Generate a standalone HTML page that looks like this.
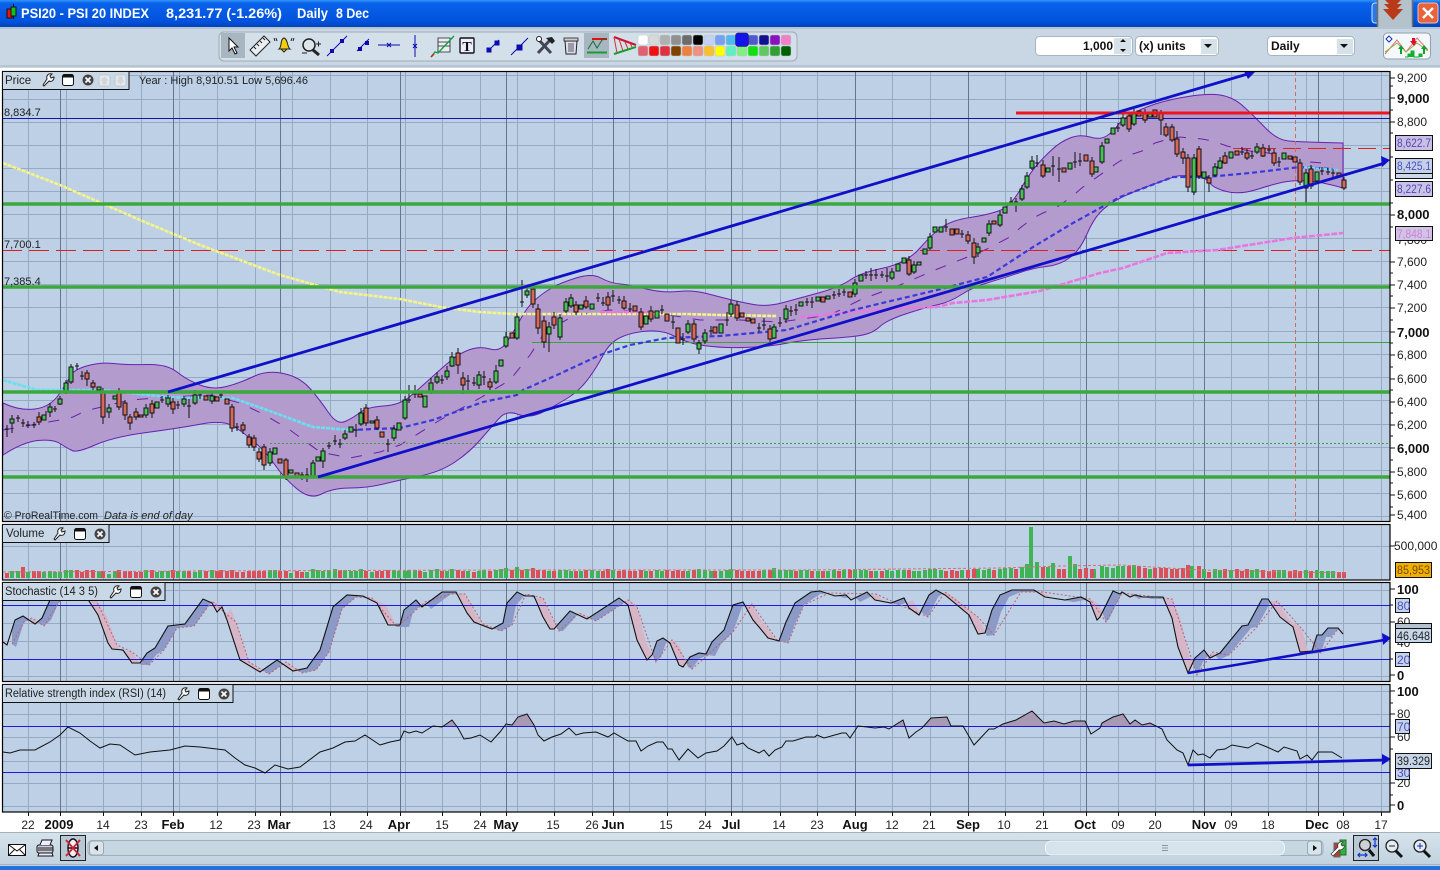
<!DOCTYPE html>
<html><head><meta charset="utf-8"><title>PSI20</title>
<style>html,body{margin:0;padding:0;background:#fff;overflow:hidden}svg{display:block;font-family:"Liberation Sans",sans-serif}</style></head>
<body>
<svg xmlns="http://www.w3.org/2000/svg" width="1440" height="870" viewBox="0 0 1440 870">
<defs>
<linearGradient id="tb" x1="0" y1="0" x2="0" y2="1"><stop offset="0" stop-color="#2f96fa"/><stop offset=".12" stop-color="#0a62ea"/><stop offset=".8" stop-color="#0052dc"/><stop offset="1" stop-color="#0043b8"/></linearGradient>
<linearGradient id="bb" x1="0" y1="0" x2="0" y2="1"><stop offset="0" stop-color="#d6e3ec"/><stop offset="1" stop-color="#c0d2de"/></linearGradient>
<g id="wr"><path d="M-6 5l1 1 5-5c2 1 5 0 5-4l-3 1-1-2 2-2c-4-1-6 2-5 5z" fill="#fff" stroke="#222"/></g>
<g id="win"><rect x="-5.5" y="-5.5" width="11" height="11" rx="2" fill="#fff" stroke="#111"/><rect x="-5" y="-5.5" width="10" height="3" fill="#111"/></g>
<g id="xc"><circle r="5.5" fill="#444"/><path d="M-2.5-2.5l5 5m0-5l-5 5" stroke="#fff" stroke-width="1.8"/></g>
<polygon id="kb" points="3,642 7,645 15,620 23,616 35,624 42,618 50,600 56,590 80,588 87,598 98,615 108,643 112,649 123,650 132,663 140,663 147,653 155,648 168,626 185,624 203,599 212,603 217,612 222,607 227,620 240,660 260,672 277,660 293,671 307,668 320,650 333,607 347,595 363,596 377,603 388,625 400,625 404,610 416,600 422,607 442,592 456,592 467,613 474,622 492,629 503,623 507,603 517,592 525,596 534,596 543,617 550,629 554,629 570,611 587,619 619,598 628,605 637,640 647,660 652,655 657,641 663,638 670,643 679,665 683,667 690,657 699,653 706,654 712,642 724,630 733,605 743,602 753,620 759,627 768,638 779,641 786,622 795,603 811,592 820,591 835,596 846,595 851,600 867,592 875,600 891,603 904,598 909,608 919,615 929,595 936,590 945,595 969,615 978,634 985,633 992,610 1000,595 1012,590 1034,590 1045,597 1065,600 1081,597 1090,602 1097,620 1100,617 1113,591 1120,594 1122,592 1130,597 1135,595 1143,597 1163,597 1172,618 1178,647 1188,673 1195,658 1204,650 1210,658 1220,653 1242,626 1248,625 1262,599 1268,599 1280,617 1293,627 1300,652 1312,651 1317,635 1322,635 1328,628 1338,628 1343,634 1343,700 3,700"/>
<polygon id="ka" points="3,642 7,645 15,620 23,616 35,624 42,618 50,600 56,590 80,588 87,598 98,615 108,643 112,649 123,650 132,663 140,663 147,653 155,648 168,626 185,624 203,599 212,603 217,612 222,607 227,620 240,660 260,672 277,660 293,671 307,668 320,650 333,607 347,595 363,596 377,603 388,625 400,625 404,610 416,600 422,607 442,592 456,592 467,613 474,622 492,629 503,623 507,603 517,592 525,596 534,596 543,617 550,629 554,629 570,611 587,619 619,598 628,605 637,640 647,660 652,655 657,641 663,638 670,643 679,665 683,667 690,657 699,653 706,654 712,642 724,630 733,605 743,602 753,620 759,627 768,638 779,641 786,622 795,603 811,592 820,591 835,596 846,595 851,600 867,592 875,600 891,603 904,598 909,608 919,615 929,595 936,590 945,595 969,615 978,634 985,633 992,610 1000,595 1012,590 1034,590 1045,597 1065,600 1081,597 1090,602 1097,620 1100,617 1113,591 1120,594 1122,592 1130,597 1135,595 1143,597 1163,597 1172,618 1178,647 1188,673 1195,658 1204,650 1210,658 1220,653 1242,626 1248,625 1262,599 1268,599 1280,617 1293,627 1300,652 1312,651 1317,635 1322,635 1328,628 1338,628 1343,634 1343,560 3,560"/>
<clipPath id="da"><use href="#ka" transform="translate(9,2)"/></clipPath>
<clipPath id="db"><use href="#kb" transform="translate(9,2)"/></clipPath>
<clipPath id="sp"><rect x="3" y="583" width="1387" height="98"/></clipPath>
<clipPath id="ra"><rect x="3" y="685" width="1387" height="41"/></clipPath>
</defs>

<!-- title bar -->
<rect width="1440" height="27" fill="url(#tb)"/>
<rect x="7" y="9" width="5" height="9" fill="#f01010" stroke="#111"/><path d="M13.5 4v15" stroke="#111"/><rect x="11" y="7" width="5" height="9" fill="#10c020" stroke="#111"/>
<g fill="#fff" font-weight="bold" font-size="14">
<text x="21" y="18" textLength="128" lengthAdjust="spacingAndGlyphs">PSI20 - PSI 20 INDEX</text>
<text x="166" y="18" textLength="116" lengthAdjust="spacingAndGlyphs">8,231.77 (-1.26%)</text>
<text x="297" y="18" textLength="31" lengthAdjust="spacingAndGlyphs">Daily</text>
<text x="336" y="18" textLength="33" lengthAdjust="spacingAndGlyphs">8 Dec</text>
</g>
<rect x="1372" y="3" width="20" height="20" rx="3" fill="#2a78e8" stroke="#cfe0fa"/>
<rect x="1377.5" y="-1" width="35" height="31" fill="#b4c2cc" stroke="#6c6c6c" stroke-width="1.5"/>
<path d="M1385 0h16l-8 8zM1384 4h18l-9 9zM1383 9h20l-10 11z" fill="#b83a18"/>
<rect x="1418" y="3" width="20" height="20" rx="3" fill="#e8623c" stroke="#f4c0b0"/><path d="M1423 8l10 10m0-10l-10 10" stroke="#fff" stroke-width="2.4"/>

<!-- toolbar -->
<rect y="27" width="1440" height="41" fill="#c8d7e3"/>
<path d="M0 28H1440M0 66H1440" stroke="#a5b2bc"/>
<rect x="219" y="32" width="578" height="29" rx="5" fill="#d3e0ea" stroke="#9eabb5"/>
<rect x="221" y="33" width="24" height="25" fill="#a7b6c1"/>
<path d="M229 38v13l3-3 3 6 2-1-3-6h4z" fill="#fff" stroke="#111"/>
<path d="M250 50l14-14 6 6-14 14z" fill="#e8eef2" stroke="#222"/><path d="M254 47l2 2m1-5l2 2m1-5l2 2m1-5l2 2" stroke="#222"/>
<path d="M279 49c3-2 1-10 5-11 4 1 3 9 6 11z" fill="#f4cc10" stroke="#222"/><path d="M281 49h6l-3 3z" fill="#f4cc10" stroke="#222"/><path d="M276 38l1 3m-3-3l1 3M292 38l-1 3m3-3l-1 3" stroke="#222"/>
<circle cx="309" cy="45" r="6" fill="#dfe6ea" stroke="#222" stroke-width="1.5"/><path d="M313 50l6 5" stroke="#222" stroke-width="3"/><path d="M316 44h5m-2.500-2.500v5M302 53h5" stroke="#222"/>
<g stroke="#0a0ab0" fill="none"><path d="M327 56l20-20M352 56" /><path d="M357 51l12-12M378 45h22M415 35v22"/><path d="M431 55" /></g>
<g fill="#0a0ab0"><rect x="330" y="49" width="4" height="4"/><rect x="340" y="39" width="4" height="4"/><rect x="358" y="47" width="4" height="4"/><rect x="365" y="41" width="4" height="4"/><path d="M387 43l4 4m0-4l-4 4M413 44l4 4m0-4l-4 4" stroke="#0a0ab0"/></g>
<path d="M438 38h12v14h-12zM438 42h12M438 46h12" fill="#e8eef2" stroke="#222" stroke-width=".8"/><path d="M431 57l4-5 3 1 16-17" fill="none" stroke="#10a040" stroke-width="1.4"/><path d="M431 57l3-3" stroke="#d02020" stroke-width="1.5"/>
<rect x="460" y="38" width="14" height="15" rx="1" fill="#eef" stroke="#111" stroke-width="1.400"/><text x="467" y="51" font-size="14" font-family="Liberation Serif,serif" font-weight="bold" text-anchor="middle" fill="#111">T</text>
<g stroke="#0a0ab0"><path d="M487 52l12-12"/><rect x="487" y="48" width="4" height="4" fill="#0a0ab0"/><rect x="495" y="41" width="4" height="4" fill="#0a0ab0"/><path d="M511 55l17-17M515 51" /><rect x="517" y="45" width="5" height="5" fill="#0a0ab0"/></g>
<path d="M538 39l13 14M551 39l-13 14" stroke="#445" stroke-width="3"/><path d="M546 38l6-1 3 4-3 3z" fill="#222"/><circle cx="539" cy="39" r="2.500" fill="#fff" stroke="#222"/>
<path d="M565 41h12l-1 13h-10z" fill="#dde" stroke="#222"/><rect x="564" y="38" width="14" height="3" fill="#ccc" stroke="#222" stroke-width=".8"/><path d="M569 43v9m2-9v9m2-9v9" stroke="#222" stroke-width=".7"/>
<rect x="584" y="33" width="25" height="25" fill="#a7b6c1"/>
<path d="M592 39h15" stroke="#e01010" stroke-width="2"/><path d="M587 52.500h20" stroke="#10a030" stroke-width="2"/><path d="M588 49l5-8 4 7 5-8 4-1" fill="none" stroke="#107030"/>
<path d="M614 37l22 8" stroke="#d01030" stroke-width="2"/><path d="M614 54l22-7" stroke="#10a030" stroke-width="2"/><path d="M614 37l3 16m2-14l4 12m2-9l3 7m2-6l2 4" stroke="#d03030"/>
<!-- palette -->
<g stroke="#b8c6d0" stroke-width=".5">
<rect x="638" y="35" width="10" height="10" rx="2" fill="#fff"/><rect x="649" y="35" width="10" height="10" rx="2" fill="#d8d8d8"/><rect x="660" y="35" width="10" height="10" rx="2" fill="#b0b0b0"/><rect x="671" y="35" width="10" height="10" rx="2" fill="#909090"/><rect x="682" y="35" width="10" height="10" rx="2" fill="#6c6c6c"/><rect x="693" y="35" width="10" height="10" rx="2" fill="#000"/><rect x="704" y="35" width="10" height="10" rx="2" fill="#c4d0f4"/><rect x="715" y="35" width="10" height="10" rx="2" fill="#78a0f0"/><rect x="726" y="35" width="10" height="10" rx="2" fill="#50b8f0"/><rect x="748" y="35" width="10" height="10" rx="2" fill="#5058d0"/><rect x="759" y="35" width="10" height="10" rx="2" fill="#101090"/><rect x="770" y="35" width="10" height="10" rx="2" fill="#8a10c0"/><rect x="781" y="35" width="10" height="10" rx="2" fill="#f080c8"/>
<rect x="638" y="46" width="10" height="10" rx="2" fill="#e06070"/><rect x="649" y="46" width="10" height="10" rx="2" fill="#f01010"/><rect x="660" y="46" width="10" height="10" rx="2" fill="#e03040"/><rect x="671" y="46" width="10" height="10" rx="2" fill="#804000"/><rect x="682" y="46" width="10" height="10" rx="2" fill="#f08040"/><rect x="693" y="46" width="10" height="10" rx="2" fill="#f09080"/><rect x="704" y="46" width="10" height="10" rx="2" fill="#f8c030"/><rect x="715" y="46" width="10" height="10" rx="2" fill="#ff0"/><rect x="726" y="46" width="10" height="10" rx="2" fill="#60f0c0"/><rect x="737" y="46" width="10" height="10" rx="2" fill="#80f080"/><rect x="748" y="46" width="10" height="10" rx="2" fill="#10e010"/><rect x="759" y="46" width="10" height="10" rx="2" fill="#60c860"/><rect x="770" y="46" width="10" height="10" rx="2" fill="#30a030"/><rect x="781" y="46" width="10" height="10" rx="2" fill="#006000"/>
<rect x="735.500" y="33" width="13" height="13.500" rx="2.500" fill="#1414e8" stroke="#223"/>
</g>
<!-- right controls -->
<rect x="1035.500" y="36.500" width="97" height="19" rx="4" fill="#fff" stroke="#a8b5be"/><rect x="1114" y="38" width="17" height="16" fill="#d6e2ea"/>
<text x="1113" y="50" font-size="12" font-weight="bold" text-anchor="end" fill="#111">1,000</text><path d="M1120 42l3-3 3 3zM1120 49l3 3 3-3z" fill="#111"/>
<rect x="1135.500" y="36.500" width="83" height="19" rx="4" fill="#fff" stroke="#a8b5be"/><text x="1139" y="50" font-size="12" font-weight="bold" fill="#111">(x) units</text><rect x="1201" y="39" width="16" height="15" fill="#d6e2ea"/><path d="M1204 44h8l-4 4z" fill="#111"/>
<rect x="1267.500" y="36.500" width="87" height="19" rx="4" fill="#fff" stroke="#a8b5be"/><text x="1271" y="50" font-size="12" font-weight="bold" fill="#111">Daily</text><rect x="1337" y="39" width="16" height="15" fill="#d6e2ea"/><path d="M1340 44h8l-4 4z" fill="#111"/>
<rect x="1383.500" y="33" width="47" height="26" rx="4" fill="#f4f8fa" stroke="#92a0aa"/>
<path d="M1385 54l12-14 9 12 11-14 11 12" fill="none" stroke="#e07070"/><path d="M1385 52l12-9 9 9 11-9 11 8" fill="none" stroke="#90b040"/><path d="M1405 57h3v-3h3v-3h3v6h5v-3h3v3" fill="#10b030" stroke="#10b030"/><path d="M1401 45l-3 4h2v5h2v-5h2zM1424 45l-3 4h2v5h2v-5h2z" fill="#10a030"/><path d="M1412 38h3v3h2l-3 5-4-5h2z" fill="#e01030"/><path d="M1389 36l3 3-3 3-3-3z" fill="#fff" stroke="#1030c0"/>

<!-- chart background -->
<rect y="68" width="1440" height="764" fill="#fff"/>
<rect x="2" y="71" width="1388" height="741" fill="#bdd0e6"/>
<!-- minor vertical -->
<path stroke="#97aac4" fill="none" d="M28.500 71V812M66.500 71V812M103.500 71V812M141.500 71V812M179.500 71V812M217.500 71V812M255.500 71V812M292.500 71V812M330.500 71V812M367.500 71V812M405.500 71V812M442.500 71V812M480.500 71V812M517.500 71V812M554.500 71V812M592.500 71V812M629.500 71V812M667.500 71V812M705.500 71V812M742.500 71V812M780.500 71V812M817.500 71V812M855.500 71V812M892.500 71V812M930.500 71V812M968.500 71V812M1005.500 71V812M1043.500 71V812M1080.500 71V812M1118.500 71V812M1155.500 71V812M1193.500 71V812M1231.500 71V812M1268.500 71V812M1306.500 71V812M1343.500 71V812M1381.500 71V812"/>
<!-- horizontal grids -->
<path stroke="#97aac4" fill="none" d="M2 75.500H1390M2 99.500H1390M2 122.500H1390M2 145.500H1390M2 168.500H1390M2 191.500H1390M2 214.500H1390M2 238.500H1390M2 261.500H1390M2 284.500H1390M2 307.500H1390M2 331.500H1390M2 354.500H1390M2 377.500H1390M2 400.500H1390M2 424.500H1390M2 447.500H1390M2 470.500H1390M2 493.500H1390M2 516.500H1390M2 546.500H1390M2 590.500H1390M2 623.500H1390M2 641.500H1390M2 676.500H1390M2 691.500H1390M2 714.500H1390M2 737.500H1390M2 761.500H1390M2 783.500H1390M2 806.500H1390"/>
<!-- major vertical -->
<path stroke="#65758f" fill="none" d="M60.500 71V812M173.500 71V812M280.500 71V812M400.500 71V812M506.500 71V812M613.500 71V812M731.500 71V812M855.500 71V812M968.500 71V812M1086.500 71V812M1204.500 71V812M1318.500 71V812"/>

<!-- bollinger -->
<path fill="#b39bce" stroke="#6a20b0" d="M3 403Q20 411 35 409Q50 407 58.5 395Q67 383 70 376.5Q73 370 86.5 366Q100 362 113.5 363.5Q127 365 147 364.5Q167 364 177 372Q187 380 200 385Q213 390 226.5 386.5Q240 383 253.5 376.5Q267 370 283.5 373.5Q300 377 310 388.5Q320 400 328.5 412.5Q337 425 345 421.5Q353 418 360 412.5Q367 407 383.5 406Q400 405 410 396.5Q420 388 431.5 377.5Q443 367 451.5 360Q460 353 470 349.5Q480 346 490 349Q500 352 506.5 342.5Q513 333 520 320Q527 307 535 300Q543 293 551.5 288Q560 283 576 278Q592 273 601 278Q610 283 620 284Q630 285 646.5 289Q663 293 678 291.5Q693 290 706.5 293.5Q720 297 730 299.5Q740 302 753.5 304.5Q767 307 783.5 302.5Q800 298 820 292.5Q840 287 850 280Q860 273 883.5 268Q907 263 920 248Q933 233 943 226.500Q953 220 970 217.5Q987 215 998.5 211Q1010 207 1020 190Q1030 173 1036.5 165.5Q1043 158 1051.5 150Q1060 142 1070 138Q1080 134 1090 137Q1100 140 1106.5 136Q1113 132 1118 125Q1123 118 1140 110Q1157 102 1182 97.5Q1207 93 1220 95Q1233 97 1243 106Q1253 115 1265 127.5Q1277 140 1288.5 141Q1300 142 1343 143L1343 188Q1322 182 1309.5 181Q1297 180 1287 181.5Q1277 183 1258.5 189Q1240 195 1226.5 191.5Q1213 188 1210 183Q1207 178 1194.5 176.5Q1182 175 1177.5 176Q1173 177 1151.5 185Q1130 193 1118.5 199Q1107 205 1100 212.5Q1093 220 1086.5 235Q1080 250 1070 257.5Q1060 265 1046.5 266.5Q1033 268 1020 272.5Q1007 277 990 282Q973 287 961.5 294.5Q950 302 938.5 304.5Q927 307 907 313.5Q887 320 880 326.5Q873 333 863 335Q853 337 828 338.5Q803 340 785 343.5Q767 347 743.5 347.5Q720 348 703.5 345.5Q687 343 675 336.5Q663 330 648 331Q633 332 621.5 337Q610 342 603.5 354.5Q597 367 588.5 378.5Q580 390 570 396.5Q560 403 545 411Q530 419 518.5 414.5Q507 410 500 417.5Q493 425 481.5 438.5Q470 452 455 462Q440 472 420 476Q400 480 383.5 484Q367 488 350 488Q333 488 321.5 494Q310 500 296.5 488.5Q283 477 275 465Q267 453 255 442.5Q243 432 233 426Q223 420 201.5 424Q180 428 146.5 432.5Q113 437 95 445Q77 453 72 450.5Q67 448 60 443.5Q53 439 38 440.5Q23 442 3 455Z"/>
<polyline fill="none" stroke="#6a20a8" stroke-dasharray="11 12" points="3,430 60,420 73,417 85,411 130,400 170,397 210,395 240,403 265,415 290,430 320,452 350,458 380,452 400,445 440,420 480,398 510,380 530,355 545,332 575,315 610,310 650,312 700,320 740,320 780,322 830,315 860,300 900,285 935,270 985,250 1010,237 1020,228 1033,218 1043,213 1057,207 1070,198 1083,187 1093,180 1107,170 1117,163 1130,155 1142,151 1155,143 1165,140 1180,137 1190,138 1202,139 1213,141 1227,146 1240,149 1250,151 1263,152 1277,155 1297,161 1310,162 1322,163 1333,165"/>

<!-- static lines -->
<path d="M2 118.500H1390" stroke="#1414b0"/>
<path d="M1233 148.500H1390" stroke="#e02020" stroke-dasharray="18 7"/>
<path d="M2 250.500H1390" stroke="#d82020" stroke-dasharray="20 7"/>
<path d="M532 342.500H1390" stroke="#3f9f3f"/>
<path d="M270 443.500H1390" stroke="#3f9f3f" stroke-dasharray="2 2"/>
<path d="M1295.500 71V521" stroke="#d86868" stroke-dasharray="4 3"/>

<!-- MAs -->
<polyline fill="none" stroke="#f4f488" stroke-width="2.600" stroke-dasharray="4 1" points="3,163 60,185 140,220 200,245 280,275 340,292 400,299 440,307 480,312 513,314 557,314 600,314 687,314 720,315 777,316"/>
<polyline fill="none" stroke="#e878e0" stroke-width="2.600" stroke-dasharray="5 1" points="600,312 650,312"/>
<polyline fill="none" stroke="#e878e0" stroke-width="2.600" stroke-dasharray="6 1.500" points="800,317 840,313 900,308 937,307 953,303 987,300 1040,291 1100,273 1123,268 1167,253 1217,250 1293,238 1343,233"/>
<polyline fill="none" stroke="#68e0f0" stroke-width="2.600" stroke-dasharray="4 1" points="3,380 37,390 103,390 167,397 200,398 233,398 267,410 313,427 350,430"/>
<polyline fill="none" stroke="#3a3ad8" stroke-width="2.200" stroke-dasharray="5 3" points="350,430 400,428 433,420 483,402 517,395 523,390 557,375 600,355 630,345 667,338 720,336 787,330 853,310 937,290 987,277 1033,247 1073,223 1120,197 1173,177 1207,177 1250,173 1300,167 1333,169"/>
<path d="M1300 167l38 3" stroke="#68e0f0" stroke-width="2" stroke-dasharray="3 1" fill="none"/>

<!-- candle wicks -->
<g fill="none" stroke="#111">
<path d="M5 429h4m-2-4v12M16 418h4m-2-3v7M21 423h4m-2-4v8M26 425h4m-2-4v7M32 425h4m-2-3v6M53 409h4m-2-3v6M75 366h4m-2-3v7M80 376h4m-2-5v9M160 400h4m-2-4v7M176 405h4m-2-4v8M187 406h4m-2-7v19M198 395h4m-2-4v8M219 395h4m-2-4v7M235 427h4m-2-4v8M300 475h4m-2-3v8M305 475h4m-2-7v14M327 446h4m-2-4v7M333 441h4m-2-6v10M338 444h4m-2-5v9M354 430h4m-2-6v13M386 444h4m-2-5v13M407 400h4m-2-15v18M413 394h4m-2-9v13M440 380h4m-2-5v9M466 381h4m-2-6v15M472 383h4m-2-6v9M482 377h4m-2-6v14M520 302h4m-2-22v27M596 298h4m-2-5v9M601 303h4m-2-6v9M611 296h4m-2-6v12M617 300h4m-2-4v8M628 309h4m-2-6v9M660 310h4m-2-5v9M671 322h4m-2-6v13M681 339h4m-2-6v12M709 331h4m-2-5v9M725 320h4m-2-8v14M757 328h4m-2-5v9M762 325h4m-2-7v12M778 323h4m-2-6v10M789 311h4m-2-5v10M794 310h4m-2-6v11M805 302h4m-2-4v8M810 302h4m-2-5v11M832 295h4m-2-4v8M837 294h4m-2-5v8M842 292h4m-2-6v10M864 275h4m-2-4v8M869 275h4m-2-7v13M874 275h4m-2-6v10M880 275h4m-2-4v7M885 276h4m-2-8v14M944 227h4m-2-8v13M960 234h4m-2-4v8M1009 202h4m-2-5v8M1014 202h4m-2-4v14M1035 163h4m-2-8v12M1051 166h4m-2-10v20M1057 169h4m-2-12v25M1073 162h4m-2-10v16M1078 161h4m-2-8v13M1116 128h4m-2-5v9M1240 152h4m-2-5v8M1250 156h4m-2-5v8M1267 150h4m-2-5v8M1277 162h4m-2-5v10M1320 171h4m-2-4v8M1326 172h4m-2-4v7M1331 173h4m-2-4v8"/>
<path d="M12 415v18M39 412v13M46 411v9M50 403v14M60 396v9M66 380v14M71 364v20M87 370v16M93 380v10M103 388v36M109 404v14M119 388v22M125 400v20M130 414v16M136 408v12M146 404v14M152 400v18M168 395v12M173 398v16M184 396v11M195 390v15M212 392v12M232 404v28M243 422v12M249 434v14M254 435v16M259 448v14M264 444v26M270 448v18M286 458v22M313 460v18M323 448v20M345 430v10M361 408v18M366 404v22M377 416v14M394 425v16M405 396v24M431 378v16M437 372v12M447 366v14M452 352v15M458 348v26M463 372v22M479 371v18M490 378v12M496 365v19M506 332v16M517 313v27M527 286v12M533 286v22M538 304v30M544 316v32M549 322v30M554 312v17M560 314v26M566 298v15M571 294v14M576 301v14M586 296v13M608 292v18M624 296v14M641 308v22M651 306v16M688 320v14M694 320v22M699 340v14M705 329v15M731 300v17M737 301v20M770 325v17M774 324v15M786 305v18M855 279v18M892 268v12M909 256v20M914 261v13M930 233v17M968 231v13M974 238v26M978 243v14M989 220v16M1000 211v16M1022 185v16M1027 172v17M1032 156v14M1043 160v18M1092 157v20M1102 142v22M1123 114v13M1129 112v20M1134 109v17M1145 109v14M1161 110v25M1166 123v14M1172 124v18M1177 131v26M1183 148v16M1188 154v38M1194 154v41M1199 146v33M1209 175v17M1215 163v14M1220 157v12M1225 152v12M1247 149v11M1257 143v11M1263 144v13M1274 149v17M1300 159v26M1306 169v34M1311 165v24M1344 177v13"/>
</g>
<!-- green bodies -->
<path fill="#48c058" stroke="#111" d="M10 419h4v4h-4zM42 415h4v5h-4zM48 407h4v5h-4zM58 399h4v5h-4zM64 383h4v9h-4zM69 367h4v15h-4zM97 387h4v3h-4zM107 408h4v4h-4zM113 396h4v3h-4zM144 408h4v7h-4zM155 402h4v6h-4zM166 398h4v6h-4zM182 399h4v5h-4zM193 395h4v8h-4zM210 396h4v5h-4zM268 452h4v11h-4zM273 448h4v6h-4zM289 470h4v3h-4zM311 463h4v13h-4zM316 457h4v4h-4zM321 451h4v10h-4zM343 434h4v4h-4zM349 427h4v5h-4zM359 413h4v11h-4zM370 421h4v2h-4zM392 429h4v9h-4zM397 423h4v7h-4zM403 400h4v18h-4zM423 396h4v11h-4zM429 383h4v9h-4zM435 377h4v5h-4zM445 371h4v6h-4zM450 357h4v9h-4zM477 375h4v10h-4zM494 371h4v11h-4zM499 360h4v6h-4zM504 337h4v9h-4zM515 317h4v21h-4zM525 291h4v4h-4zM547 327h4v7h-4zM558 318h4v19h-4zM564 302h4v9h-4zM569 298h4v8h-4zM579 305h4v4h-4zM590 304h4v5h-4zM644 316h4v8h-4zM655 311h4v7h-4zM686 324h4v8h-4zM697 343h4v6h-4zM703 333h4v8h-4zM719 324h4v9h-4zM729 304h4v10h-4zM772 327h4v11h-4zM784 309h4v10h-4zM799 302h4v4h-4zM816 297h4v4h-4zM826 296h4v3h-4zM853 283h4v11h-4zM859 275h4v6h-4zM890 272h4v6h-4zM896 264h4v7h-4zM902 258h4v5h-4zM912 265h4v7h-4zM917 262h4v3h-4zM923 249h4v5h-4zM928 237h4v11h-4zM933 227h4v5h-4zM939 227h4v5h-4zM976 247h4v6h-4zM982 238h4v4h-4zM987 224h4v9h-4zM998 215h4v10h-4zM1003 207h4v6h-4zM1020 189h4v10h-4zM1025 176h4v11h-4zM1030 161h4v7h-4zM1046 168h4v4h-4zM1068 163h4v6h-4zM1094 167h4v5h-4zM1100 146h4v16h-4zM1105 139h4v4h-4zM1111 128h4v6h-4zM1121 118h4v7h-4zM1132 113h4v11h-4zM1148 113h4v4h-4zM1192 158h4v34h-4zM1202 172h4v6h-4zM1213 167h4v8h-4zM1218 161h4v7h-4zM1229 152h4v6h-4zM1255 147h4v5h-4zM1282 153h4v6h-4zM1304 173h4v15h-4zM1315 172h4v9h-4z"/>
<!-- red bodies -->
<path fill="#d86858" stroke="#111" d="M37 417h4v5h-4zM85 373h4v6h-4zM91 383h4v4h-4zM101 393h4v24h-4zM117 393h4v14h-4zM123 403h4v12h-4zM128 417h4v6h-4zM134 412h4v5h-4zM139 415h4v2h-4zM150 404h4v9h-4zM171 402h4v7h-4zM204 396h4v4h-4zM215 397h4v4h-4zM225 399h4v5h-4zM230 407h4v21h-4zM241 425h4v5h-4zM247 437h4v8h-4zM252 438h4v9h-4zM257 452h4v7h-4zM262 447h4v18h-4zM278 459h4v4h-4zM284 460h4v16h-4zM295 473h4v3h-4zM364 408h4v15h-4zM375 420h4v8h-4zM380 432h4v5h-4zM418 394h4v3h-4zM456 353h4v12h-4zM461 378h4v7h-4zM488 382h4v5h-4zM510 333h4v5h-4zM531 289h4v15h-4zM536 309h4v19h-4zM542 321h4v21h-4zM552 317h4v8h-4zM574 305h4v7h-4zM584 301h4v6h-4zM606 297h4v8h-4zM622 301h4v7h-4zM633 306h4v5h-4zM639 312h4v15h-4zM649 311h4v8h-4zM665 314h4v7h-4zM676 328h4v15h-4zM692 324h4v15h-4zM713 327h4v6h-4zM735 305h4v13h-4zM740 313h4v4h-4zM746 318h4v3h-4zM751 319h4v4h-4zM768 329h4v10h-4zM821 297h4v5h-4zM848 292h4v5h-4zM907 260h4v14h-4zM950 229h4v6h-4zM955 229h4v5h-4zM966 235h4v6h-4zM972 243h4v14h-4zM992 221h4v3h-4zM1041 165h4v11h-4zM1062 168h4v4h-4zM1084 155h4v6h-4zM1090 161h4v13h-4zM1127 116h4v13h-4zM1137 111h4v5h-4zM1143 113h4v7h-4zM1153 110h4v7h-4zM1159 114h4v6h-4zM1164 127h4v8h-4zM1170 127h4v13h-4zM1175 139h4v15h-4zM1181 152h4v6h-4zM1186 158h4v29h-4zM1197 149h4v27h-4zM1207 178h4v5h-4zM1223 156h4v7h-4zM1235 151h4v4h-4zM1245 153h4v5h-4zM1261 148h4v8h-4zM1272 153h4v10h-4zM1288 156h4v3h-4zM1293 157h4v5h-4zM1298 163h4v19h-4zM1309 169h4v17h-4zM1337 173h4v3h-4zM1342 180h4v8h-4z"/>

<!-- thick horizontals -->
<g fill="none">
<path d="M2 204H1390M2 287H1390M2 392H1390M2 477H1390" stroke="#3ca83c" stroke-width="3.400"/>
<path d="M1016 113H1390" stroke="#ee1420" stroke-width="3"/>
<path d="M168 392L1251 73M318 477L1385 163" stroke="#1010c8" stroke-width="2.800"/>
</g>
<path d="M1255 72l-11-1 4 8zM1390 160l-9-4 1 11z" fill="#1010d0"/>

<!-- volume -->
<path fill="none" stroke="#3fb454" stroke-width="4" d="M12 578v-7M18 578v-7M28 578v-6M44 578v-6M50 578v-7M55 578v-6M60 578v-6M66 578v-8M71 578v-8M99 578v-7M109 578v-4M115 578v-7M146 578v-8M157 578v-6M162 578v-7M168 578v-7M178 578v-7M184 578v-7M195 578v-6M200 578v-8M212 578v-8M270 578v-8M275 578v-8M291 578v-5M307 578v-6M313 578v-9M318 578v-8M323 578v-7M329 578v-8M335 578v-9M345 578v-8M351 578v-7M356 578v-7M361 578v-9M372 578v-6M394 578v-8M399 578v-7M405 578v-7M409 578v-8M415 578v-8M425 578v-6M431 578v-8M437 578v-9M447 578v-7M452 578v-9M468 578v-7M479 578v-7M484 578v-8M496 578v-8M501 578v-9M506 578v-10M517 578v-11M527 578v-9M549 578v-7M560 578v-8M566 578v-8M571 578v-7M581 578v-7M592 578v-8M598 578v-7M613 578v-8M646 578v-7M657 578v-8M662 578v-7M688 578v-7M699 578v-9M705 578v-8M711 578v-7M721 578v-7M727 578v-8M731 578v-9M764 578v-8M774 578v-10M780 578v-8M786 578v-8M791 578v-8M801 578v-8M807 578v-8M818 578v-7M828 578v-7M834 578v-8M844 578v-8M855 578v-9M861 578v-8M866 578v-8M876 578v-7M887 578v-8M892 578v-7M898 578v-8M904 578v-8M914 578v-7M919 578v-7M925 578v-8M930 578v-9M935 578v-9M941 578v-8M962 578v-8M978 578v-9M984 578v-8M989 578v-9M1000 578v-9M1005 578v-10M1011 578v-10M1022 578v-11M1027 578v-14M1031 578v-51M1037 578v-16M1048 578v-11M1053 578v-15M1070 578v-22M1075 578v-14M1094 578v-9M1102 578v-12M1107 578v-11M1113 578v-10M1118 578v-12M1123 578v-12M1134 578v-13M1150 578v-9M1192 578v-12M1204 578v-9M1215 578v-9M1220 578v-8M1231 578v-8M1252 578v-8M1257 578v-9M1279 578v-8M1284 578v-8M1306 578v-8M1317 578v-8M1322 578v-7M1328 578v-7M1333 578v-7"/>
<path fill="none" stroke="#d85058" stroke-width="4" d="M7 578v-5M23 578v-11M34 578v-7M39 578v-7M77 578v-8M82 578v-6M87 578v-8M93 578v-8M103 578v-7M119 578v-8M125 578v-7M130 578v-7M136 578v-6M141 578v-6M152 578v-8M173 578v-8M189 578v-7M206 578v-7M217 578v-7M221 578v-8M227 578v-7M232 578v-8M237 578v-6M243 578v-6M249 578v-7M254 578v-7M259 578v-7M264 578v-7M280 578v-7M286 578v-7M297 578v-7M302 578v-6M340 578v-8M366 578v-7M377 578v-7M382 578v-7M388 578v-8M420 578v-7M442 578v-7M458 578v-8M463 578v-7M474 578v-6M490 578v-7M512 578v-8M522 578v-8M533 578v-10M538 578v-8M544 578v-8M554 578v-7M576 578v-7M586 578v-8M603 578v-7M608 578v-9M619 578v-7M624 578v-8M630 578v-7M635 578v-7M641 578v-8M651 578v-7M667 578v-8M673 578v-7M678 578v-8M683 578v-7M694 578v-8M715 578v-7M737 578v-8M742 578v-7M748 578v-7M753 578v-7M759 578v-7M770 578v-8M796 578v-7M812 578v-7M823 578v-7M839 578v-7M850 578v-8M871 578v-7M882 578v-7M909 578v-8M946 578v-7M952 578v-8M957 578v-7M968 578v-8M974 578v-9M994 578v-8M1016 578v-9M1043 578v-11M1059 578v-9M1064 578v-9M1080 578v-9M1086 578v-10M1092 578v-9M1129 578v-12M1139 578v-12M1145 578v-10M1155 578v-10M1161 578v-10M1166 578v-10M1172 578v-9M1177 578v-9M1183 578v-10M1188 578v-13M1199 578v-12M1209 578v-6M1225 578v-9M1237 578v-9M1242 578v-7M1247 578v-9M1263 578v-8M1269 578v-7M1274 578v-8M1290 578v-7M1295 578v-8M1300 578v-7M1311 578v-7M1339 578v-6M1344 578v-6"/>
<polyline fill="none" stroke="#d87070" stroke-dasharray="3 2" points="3,572 200,571 500,570 800,570 1000,568 1060,566 1120,565 1200,570 1345,573"/>

<!-- stochastic -->
<g clip-path="url(#sp)">
<g clip-path="url(#da)"><use href="#kb" fill="#8b9ac6"/></g>
<g clip-path="url(#db)"><use href="#ka" fill="#d6b6c6"/></g>
<path d="M3 605.500H1390M3 659.500H1390" stroke="#1a1ad8"/>
<polyline fill="none" stroke="#c06070" stroke-dasharray="2 2" transform="translate(9,2)" points="3,642 15,620 23,616 35,624 50,600 56,590 80,588 87,598 108,643 123,650 140,663 155,648 168,626 185,624 203,599 217,612 227,620 240,660 260,672 277,660 293,671 307,668 320,650 333,607 347,595 363,596 388,625 416,600 442,592 456,592 474,622 492,629 503,623 517,592 534,596 550,629 570,611 587,619 619,598 628,605 647,660 663,638 683,667 699,653 724,630 743,602 768,638 779,641 795,603 820,591 867,592 891,603 919,615 936,590 969,615 985,633 1012,590 1034,590 1081,597 1097,620 1113,591 1163,597 1188,673 1204,650 1220,653 1248,625 1268,599 1293,627 1312,651 1328,628"/>
<polyline fill="none" stroke="#111" stroke-width="1.100" points="3,642 7,645 15,620 23,616 35,624 42,618 50,600 56,590 80,588 87,598 98,615 108,643 112,649 123,650 132,663 140,663 147,653 155,648 168,626 185,624 203,599 212,603 217,612 222,607 227,620 240,660 260,672 277,660 293,671 307,668 320,650 333,607 347,595 363,596 377,603 388,625 400,625 404,610 416,600 422,607 442,592 456,592 467,613 474,622 492,629 503,623 507,603 517,592 525,596 534,596 543,617 550,629 554,629 570,611 587,619 619,598 628,605 637,640 647,660 652,655 657,641 663,638 670,643 679,665 683,667 690,657 699,653 706,654 712,642 724,630 733,605 743,602 753,620 759,627 768,638 779,641 786,622 795,603 811,592 820,591 835,596 846,595 851,600 867,592 875,600 891,603 904,598 909,608 919,615 929,595 936,590 945,595 969,615 978,634 985,633 992,610 1000,595 1012,590 1034,590 1045,597 1065,600 1081,597 1090,602 1097,620 1100,617 1113,591 1120,594 1122,592 1130,597 1135,595 1143,597 1163,597 1172,618 1178,647 1188,673 1195,658 1204,650 1210,658 1220,653 1242,626 1248,625 1262,599 1268,599 1280,617 1293,627 1300,652 1312,651 1317,635 1322,635 1328,628 1338,628 1343,634"/>
</g>
<path d="M1188 673L1384 640" stroke="#1010c8" stroke-width="2.500"/><path d="M1391 638l-9-5 1 12z" fill="#1010d0"/>

<!-- RSI -->
<g clip-path="url(#ra)"><polygon fill="#a899b4" points="3,752 20,750 35,750 50,742 60,735 68,727 80,733 100,748 120,745 135,755 170,750 200,747 225,750 245,765 265,773 275,765 300,767 320,752 345,742 365,735 380,745 400,740 404,731 409,733 416,731 422,733 433,726 442,727 452,720 458,728 464,739 471,738 480,735 491,742 500,732 506,724 512,725 518,717 527,714 534,725 538,735 544,741 552,737 561,734 569,728 576,735 583,733 596,732 608,737 614,733 628,741 636,741 641,751 648,746 657,742 663,742 668,749 672,749 679,760 688,749 698,758 706,753 717,751 724,746 732,737 737,745 743,743 748,748 759,753 764,750 769,756 775,750 782,747 786,741 793,741 806,737 815,737 817,735 824,738 842,733 846,733 850,738 858,726 867,727 875,728 884,727 889,729 903,720 909,738 916,732 922,728 931,718 947,717 951,726 963,726 974,745 989,729 994,729 1003,724 1016,720 1032,711 1044,723 1054,721 1064,724 1074,721 1085,721 1091,734 1100,728 1102,723 1113,717 1123,714 1130,724 1135,720 1142,725 1150,723 1162,729 1167,760 1343,760 3,760"/></g>
<path d="M3 726.500H1390M3 772.500H1390" stroke="#1a1ad8"/>
<polyline fill="none" stroke="#111" points="3,752 10,753 20,750 35,750 50,742 60,735 68,727 80,733 90,741 100,748 110,744 120,745 135,755 150,752 170,750 185,746 200,747 225,750 235,758 245,765 255,768 265,773 275,765 288,769 300,767 320,752 333,748 345,742 355,741 365,735 380,745 390,742 400,740 404,731 409,733 416,731 422,733 433,726 442,727 452,720 458,728 464,739 471,738 480,735 491,742 500,732 506,724 512,725 518,717 527,714 534,725 538,735 544,741 552,737 561,734 569,728 576,735 583,733 596,732 608,737 614,733 628,741 636,741 641,751 648,746 657,742 663,742 668,749 672,749 679,760 688,749 698,758 706,753 717,751 724,746 732,737 737,745 743,743 748,748 759,753 764,750 769,756 775,750 782,747 786,741 793,741 806,737 815,737 817,735 824,738 842,733 846,733 850,738 858,726 867,727 875,728 884,727 889,729 903,720 909,738 916,732 922,728 931,718 947,717 951,726 963,726 974,745 989,729 994,729 1003,724 1016,720 1032,711 1044,723 1054,721 1064,724 1074,721 1085,721 1091,734 1100,728 1102,723 1113,717 1123,714 1130,724 1135,720 1142,725 1150,723 1162,729 1167,740 1177,750 1183,753 1188,765 1193,750 1198,755 1203,754 1210,758 1217,750 1225,749 1232,745 1248,748 1257,743 1267,747 1278,752 1284,747 1297,751 1300,759 1307,755 1312,760 1318,752 1332,752 1342,758"/>
<path d="M1188 765L1384 760" stroke="#1010c8" stroke-width="2.800"/><path d="M1391 759l-9-5 0 11z" fill="#1010d0"/>

<!-- panel gaps and borders -->
<rect x="2" y="522" width="1390" height="2" fill="#fff"/><rect x="2" y="580.500" width="1390" height="2" fill="#fff"/><rect x="2" y="682" width="1390" height="2" fill="#fff"/>
<g fill="none" stroke="#000" stroke-width="1.200"><rect x="2.500" y="71.500" width="1387.500" height="450"/><rect x="2.500" y="524.500" width="1387.500" height="55.500"/><rect x="2.500" y="582.500" width="1387.500" height="99"/><rect x="2.500" y="684.500" width="1387.500" height="127.500"/></g>

<!-- panel labels -->
<rect x="2.500" y="71.500" width="126.500" height="18" fill="#c9d8e6" stroke="#111"/>
<text x="5" y="84" font-size="11.500" fill="#222">Price</text>
<use href="#wr" x="49" y="80"/><use href="#win" x="68" y="80"/><use href="#xc" x="88" y="80"/>
<rect x="99" y="75" width="11" height="11" rx="2" fill="#e2e8ec" stroke="#b0bac2" stroke-width=".6"/><path d="M104.500 76.500l4 4h-2v4h-4v-4h-2z" fill="#cfd6d6"/>
<rect x="115" y="75" width="11" height="11" rx="2" fill="#e2e8ec" stroke="#b0bac2" stroke-width=".6"/><path d="M120.500 84.500l4-4h-2v-4h-4v4h-2z" fill="#cfd6d6"/>
<text x="139" y="84" font-size="11" fill="#222" textLength="169" lengthAdjust="spacingAndGlyphs">Year : High 8,910.51 Low 5,696.46</text>
<g font-size="11" fill="#222"><text x="4" y="116">8,834.7</text><text x="4" y="248">7,700.1</text><text x="4" y="285">7,385.4</text></g>
<text x="4" y="519" font-size="11" fill="#222" textLength="94" lengthAdjust="spacingAndGlyphs">© ProRealTime.com</text><text x="104" y="519" font-size="11" font-style="italic" fill="#222">Data is end of day</text>

<rect x="2.500" y="524.500" width="106.500" height="18" fill="#c9d8e6" stroke="#111"/>
<text x="6" y="537" font-size="11.500" fill="#222">Volume</text>
<use href="#wr" x="60" y="534"/><use href="#win" x="80" y="534"/><use href="#xc" x="100" y="534"/>

<rect x="2.500" y="582.500" width="162.500" height="18" fill="#c9d8e6" stroke="#111"/>
<text x="5" y="595" font-size="11.500" fill="#222" textLength="93" lengthAdjust="spacingAndGlyphs">Stochastic (14 3 5)</text>
<use href="#wr" x="116" y="592"/><use href="#win" x="136" y="592"/><use href="#xc" x="156" y="592"/>

<rect x="2.500" y="684.500" width="230.500" height="18" fill="#c9d8e6" stroke="#111"/>
<text x="5" y="697" font-size="11.500" fill="#222" textLength="161" lengthAdjust="spacingAndGlyphs">Relative strength index (RSI) (14)</text>
<use href="#wr" x="184" y="694"/><use href="#win" x="204" y="694"/><use href="#xc" x="224" y="694"/>

<!-- y axis ticks -->
<path stroke="#111" d="M1390 78h5M1390 86h3M1390 98h5M1390 110h3M1390 122h5M1390 133h3M1390 157h3M1390 180h3M1390 203h3M1390 215h5M1390 227h3M1390 262h5M1390 273h3M1390 285h5M1390 296h3M1390 308h5M1390 320h3M1390 332h5M1390 343h3M1390 355h5M1390 367h3M1390 379h5M1390 390h3M1390 402h5M1390 413h3M1390 425h5M1390 436h3M1390 448h5M1390 460h3M1390 472h5M1390 483h3M1390 495h5M1390 507h3M1390 515h5M1390 546h5M1390 589h5M1390 605h3M1390 622h5M1390 659h3M1390 675h5M1390 691h5M1390 703h3M1390 714h5M1390 737h5M1390 749h3M1390 783h5M1390 795h3M1390 805h5"/>
<g font-size="12" fill="#222">
<text x="1397" y="82">9,200</text><text x="1397" y="126">8,800</text><text x="1397" y="266">7,600</text><text x="1397" y="289">7,400</text><text x="1397" y="312">7,200</text><text x="1397" y="359">6,800</text><text x="1397" y="383">6,600</text><text x="1397" y="406">6,400</text><text x="1397" y="429">6,200</text><text x="1397" y="476">5,800</text><text x="1397" y="499">5,600</text><text x="1397" y="519">5,400</text>
<text x="1394" y="550">500,000</text><text x="1397" y="244">7,800</text><text x="1397" y="626">60</text><text x="1397" y="647">40</text><text x="1397" y="718">80</text><text x="1397" y="741">60</text><text x="1397" y="787">20</text>
</g>
<g font-size="13" font-weight="bold" fill="#111">
<text x="1397" y="103">9,000</text><text x="1397" y="219">8,000</text><text x="1397" y="337">7,000</text><text x="1397" y="453">6,000</text>
<text x="1397" y="594">100</text><text x="1397" y="680">0</text><text x="1397" y="696">100</text><text x="1397" y="810">0</text>
</g>
<!-- value boxes -->
<g font-size="12">
<rect x="1395.500" y="135.500" width="37" height="15" fill="#c8c0e4" stroke="#111"/><text x="1397" y="147" fill="#5a46b4" textLength="34" lengthAdjust="spacingAndGlyphs">8,622.7</text>
<rect x="1395.500" y="173.500" width="37" height="5" fill="#cbd9ea" stroke="#111"/>
<rect x="1395.500" y="158.500" width="37" height="15" fill="#c4cfe8" stroke="#111"/><text x="1397" y="170" fill="#4a50c0" textLength="34" lengthAdjust="spacingAndGlyphs">8,425.1</text>
<rect x="1395.500" y="181.500" width="37" height="15" fill="#c8c4e8" stroke="#111"/><text x="1397" y="193" fill="#5a46b4" textLength="34" lengthAdjust="spacingAndGlyphs">8,227.6</text>
<rect x="1395.500" y="226.500" width="37" height="14" fill="#cfc4e4" stroke="#111"/><text x="1397" y="238" fill="#d080d8" textLength="34" lengthAdjust="spacingAndGlyphs">7,848.1</text>
<rect x="1395.500" y="562.500" width="36" height="15" fill="#f0b000" stroke="#111"/><text x="1397" y="574" fill="#7a4a00" textLength="33" lengthAdjust="spacingAndGlyphs">85,953</text>
<rect x="1395.500" y="598.500" width="14" height="14" fill="#c4d2ea" stroke="#111"/><text x="1397" y="610" fill="#4a50c0">80</text>
<rect x="1395.500" y="623.500" width="36" height="5" fill="#b4c2d0" stroke="#111"/>
<rect x="1395.500" y="628.500" width="36" height="14" fill="#c6d6e8" stroke="#111"/><text x="1397" y="640" fill="#222" textLength="33" lengthAdjust="spacingAndGlyphs">46.648</text>
<rect x="1395.500" y="652.500" width="14" height="14" fill="#c4d2ea" stroke="#111"/><text x="1397" y="664" fill="#4a50c0">20</text>
<rect x="1395.500" y="719.500" width="14" height="14" fill="#c4d2ea" stroke="#111"/><text x="1397" y="731" fill="#4a50c0">70</text>
<rect x="1395.500" y="765.500" width="14" height="14" fill="#c4d2ea" stroke="#111"/><text x="1397" y="777" fill="#4a50c0">30</text>
<rect x="1395.500" y="753.500" width="36" height="15" fill="#c6d6e8" stroke="#111"/><text x="1397" y="765" fill="#222" textLength="33" lengthAdjust="spacingAndGlyphs">39.329</text>
</g>

<!-- date axis -->
<path stroke="#111" d="M28.500 812v4M60.500 812v4M103.500 812v4M141.500 812v4M173.500 812v4M217.500 812v4M255.500 812v4M280.500 812v4M330.500 812v4M367.500 812v4M400.500 812v4M442.500 812v4M480.500 812v4M506.500 812v4M554.500 812v4M592.500 812v4M613.500 812v4M667.500 812v4M705.500 812v4M731.500 812v4M780.500 812v4M817.500 812v4M855.500 812v4M892.500 812v4M930.500 812v4M968.500 812v4M1005.500 812v4M1043.500 812v4M1086.500 812v4M1118.500 812v4M1155.500 812v4M1204.500 812v4M1231.500 812v4M1268.500 812v4M1318.500 812v4M1343.500 812v4M1381.500 812v4"/>
<g font-size="12" fill="#222" text-anchor="middle">
<text x="28" y="829">22</text><text x="103" y="829">14</text><text x="141" y="829">23</text><text x="216" y="829">12</text><text x="254" y="829">23</text><text x="329" y="829">13</text><text x="366" y="829">24</text><text x="442" y="829">15</text><text x="480" y="829">24</text><text x="553" y="829">15</text><text x="592" y="829">26</text><text x="666" y="829">15</text><text x="705" y="829">24</text><text x="779" y="829">14</text><text x="817" y="829">23</text><text x="892" y="829">12</text><text x="929" y="829">21</text><text x="1004" y="829">10</text><text x="1042" y="829">21</text><text x="1118" y="829">09</text><text x="1155" y="829">20</text><text x="1231" y="829">09</text><text x="1268" y="829">18</text><text x="1343" y="829">08</text><text x="1381" y="829">17</text>
</g>
<g font-size="13" font-weight="bold" fill="#111" text-anchor="middle">
<text x="59" y="829">2009</text><text x="173" y="829">Feb</text><text x="279" y="829">Mar</text><text x="399" y="829">Apr</text><text x="506" y="829">May</text><text x="613" y="829">Jun</text><text x="731" y="829">Jul</text><text x="855" y="829">Aug</text><text x="968" y="829">Sep</text><text x="1085" y="829">Oct</text><text x="1204" y="829">Nov</text><text x="1317" y="829">Dec</text>
</g>

<!-- bottom bar -->
<rect y="832" width="1440" height="34" fill="url(#bb)"/>
<path d="M0 832.500H1440M0 864.500H1440" stroke="#a5b2bc"/>
<rect y="866" width="1440" height="4" fill="#2470dc"/>
<rect x="8.500" y="844.500" width="17" height="11" fill="#fff" stroke="#111"/><path d="M9 845l8 6 8-6M9 855l6-6M25 855l-6-6" fill="none" stroke="#111"/>
<rect x="37" y="845" width="16" height="8" rx="2" fill="#ccd" stroke="#111"/><path d="M40 845l2-5h10l-2 5M39 853h13l1 3H38z" fill="#eef" stroke="#111"/><path d="M38 848h15M38 850h15" stroke="#222"/>
<rect x="60.500" y="835.500" width="25" height="25" fill="#b8c8d4" stroke="#222"/>
<ellipse cx="73" cy="848" rx="5" ry="9" fill="#eef" stroke="#111" stroke-width="1.400"/><path d="M68 848h10" stroke="#111" stroke-width="1.500"/><path d="M66 840l14 16M80 840l-14 16" stroke="#d02030" stroke-width="1.800"/>
<rect x="88" y="840.500" width="1235" height="15" rx="4" fill="#c6d7e1" stroke="#a0b0ba"/>
<rect x="89.500" y="841" width="14" height="14" rx="3" fill="#d8e4ec" stroke="#98a8b2"/><path d="M98 845v6l-4-3z" fill="#111"/>
<rect x="1045.500" y="841" width="239" height="14" rx="6" fill="#d4e3ec" stroke="#f0f6fa"/><path d="M1162 845.500h6m-6 2.500h6m-6 2.500h6" stroke="#8a9aa4"/>
<rect x="1307.500" y="841" width="14" height="14" rx="3" fill="#d8e4ec" stroke="#98a8b2"/><path d="M1313 845v6l4-3z" fill="#111"/>
<rect x="1334" y="843" width="6" height="14" fill="#b04040" stroke="#666"/><rect x="1340" y="840" width="6" height="15" fill="#30b040" stroke="#2a6a2a"/><path d="M1331 854l7-7c-1-3 1-6 5-5l-2 2 1 2 2-1c1 3-2 5-5 5l-6 6z" fill="#fff" stroke="#333" stroke-width=".7"/>
<rect x="1353.500" y="835.500" width="25" height="25" fill="#b8c8d4" stroke="#222"/>
<circle cx="1365" cy="845" r="5.500" fill="#ccd2d6" stroke="#222" stroke-width="1.300"/><path d="M1369 850l5 6" stroke="#111" stroke-width="3"/>
<path d="M1375 838v9m-2-7l2-2 2 2m-4 5l2 2 2-2M1358 855h9m-7-2l-2 2 2 2m5-4l2 2-2 2" fill="none" stroke="#1030d0" stroke-width="1.200"/>
<circle cx="1392" cy="846" r="6" fill="#e4ecf2" stroke="#222" stroke-width="1.300"/><path d="M1389 846h6" stroke="#223"/><path d="M1396 851l6 6" stroke="#111" stroke-width="3"/>
<circle cx="1420" cy="846" r="6" fill="#e4ecf2" stroke="#222" stroke-width="1.300"/><path d="M1417 846h6m-3-3v6" stroke="#1030b0"/><path d="M1424 851l6 6" stroke="#111" stroke-width="3"/>
</svg>
</body></html>
